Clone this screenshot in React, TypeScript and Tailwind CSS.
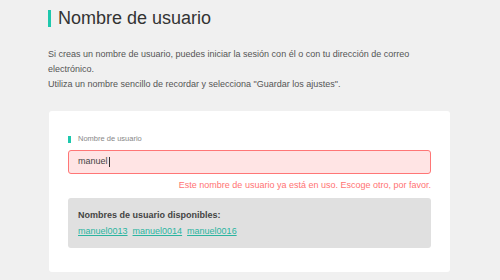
import React from "react";

const suggestions = ["manuel0013", "manuel0014", "manuel0016"];

export default function App() {
    return (
        <div className="w-[500px] h-[280px] overflow-hidden bg-[#f0f0f0] pl-[48px] font-['Liberation_Sans',Arial,sans-serif]">
            {/* título */}
            <div className="pt-[10px] flex items-center gap-[7px]">
                <div className="w-[3px] h-[17px] bg-[#1ec8ad]" />
                <h1 className="text-[18px] leading-[17px] text-[#333]">Nombre de usuario</h1>
            </div>

            <p className="mt-[20px] w-[392px] text-[9px] leading-[15px] text-[#555]">
                Si creas un nombre de usuario, puedes iniciar la sesión con él o con tu dirección de correo electrónico.
                <br />
                Utiliza un nombre sencillo de recordar y selecciona "Guardar los ajustes".
            </p>

            {/* tarjeta */}
            <div className="mt-[19px] ml-px w-[401px] bg-white rounded-[3px] px-[19px] pt-[23px] pb-[24px]">
                <div className="flex items-center gap-[7px]">
                    <div className="w-[3px] h-[7px] bg-[#1ec8ad]" />
                    <span className="text-[7.5px] leading-[10px] text-[#888]">Nombre de usuario</span>
                </div>

                <div className="mt-[6px] h-[24px] flex items-center pl-[9px] bg-[#ffe4e4] border-[1.5px] border-[#ff7676] rounded-[3px] text-[9px] text-[#444]">
                    manuel
                    <span className="w-px h-[10px] bg-[#333] ml-px" />
                </div>

                <p className="mt-[5px] text-right text-[9px] leading-[12px] text-[#ff7373]">
                    Este nombre de usuario ya está en uso. Escoge otro, por favor.
                </p>

                <div className="mt-[7px] bg-[#e0e0e0] rounded-[3px] px-[10px] pt-[11px] pb-[11px]">
                    <p className="text-[9px] leading-[12px] font-bold text-[#444]">Nombres de usuario disponibles:</p>
                    <div className="mt-[4px] flex gap-[5px] text-[9px] leading-[12px]">
                        {suggestions.map((s) => (
                            <a key={s} href="#" className="text-[#2bb5a0] underline">{s}</a>
                        ))}
                    </div>
                </div>
            </div>
        </div>
    );
}
